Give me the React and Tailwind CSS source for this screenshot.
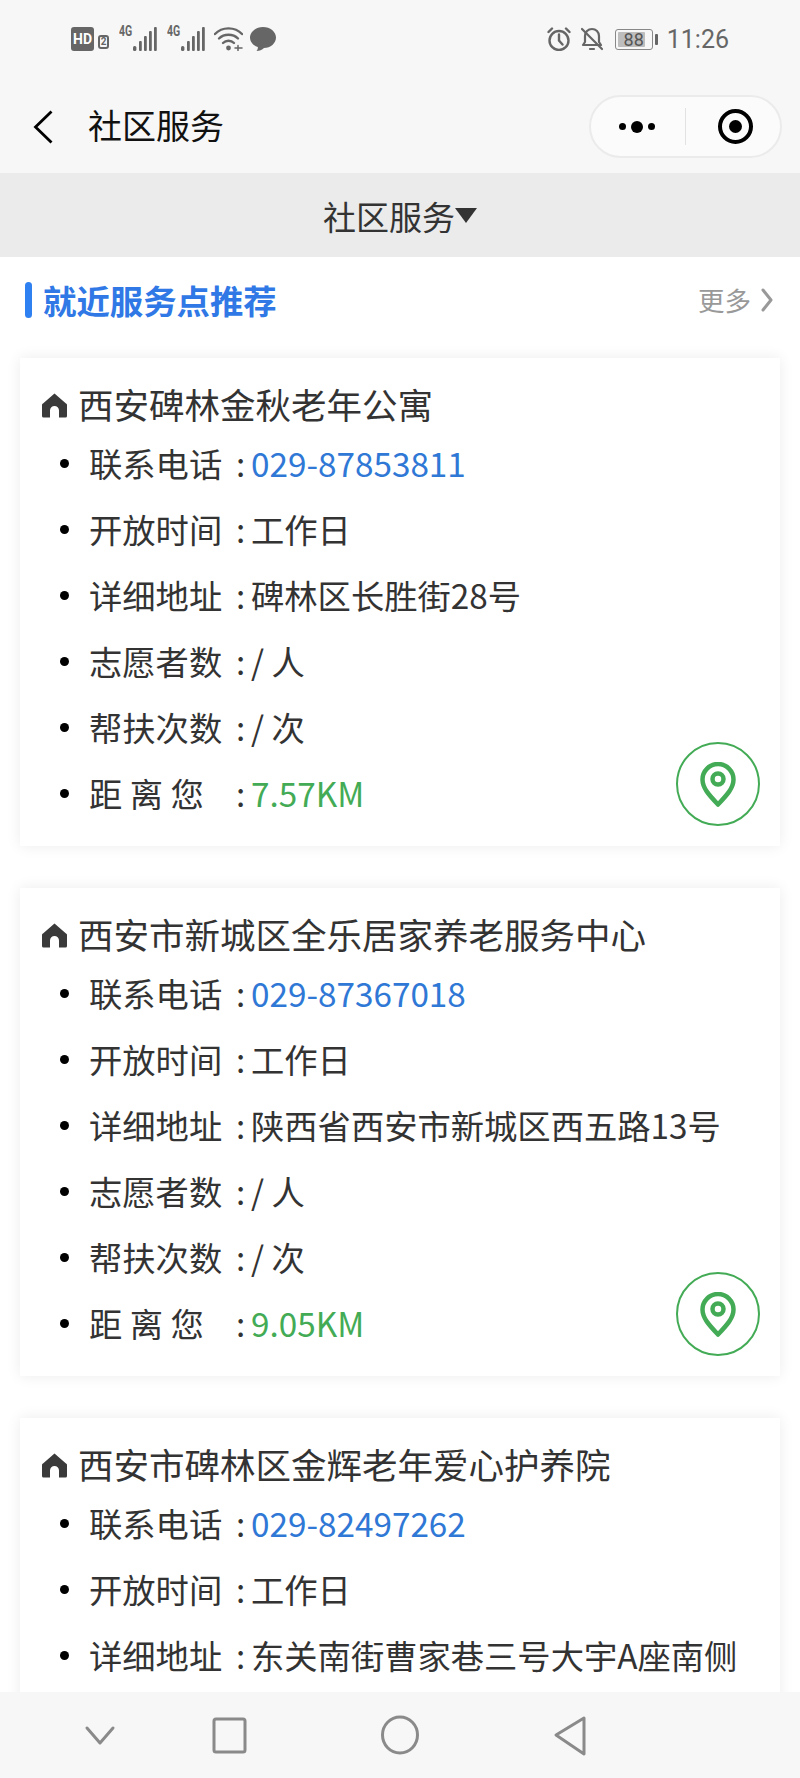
const font = { cjk: "font-['Noto_Sans_CJK_SC','Noto_Sans',sans-serif]" };

const places = [
  { name: "西安碑林金秋老年公寓", phone: "029-87853811", address: "碑林区长胜街28号", distance: "7.57KM" },
  { name: "西安市新城区全乐居家养老服务中心", phone: "029-87367018", address: "陕西省西安市新城区西五路13号", distance: "9.05KM" },
  { name: "西安市碑林区金辉老年爱心护养院", phone: "029-82497262", address: "东关南街曹家巷三号大宇A座南侧", distance: "3.21KM" },
];

function Signal() {
  return (
    <div className="flex items-start w-[39px] h-[24px] relative">
      <span className="absolute left-0 top-[-3px] text-[14px] leading-[14px] font-bold text-[#666] font-['Roboto',sans-serif] scale-x-75 origin-left">4G</span>
      <svg width="25" height="24" viewBox="0 0 25 24" className="absolute left-[14px] top-0" fill="#666">
        <rect x="0" y="19" width="3.4" height="5" rx="1.5" />
        <rect x="6" y="14" width="2.8" height="10" rx="1" />
        <rect x="11" y="9" width="2.8" height="15" rx="1" />
        <rect x="16" y="4" width="2.8" height="20" rx="1" />
        <rect x="21" y="0" width="2.8" height="24" rx="1" />
      </svg>
    </div>
  );
}

function StatusBar() {
  return (
    <div className="h-[80px] flex items-start justify-between pt-[27px] pl-[71px] pr-[71px]">
      <div className="flex items-center h-[24px]">
        <div className="w-[23px] h-[24px] rounded-[3px] bg-[#666] text-white text-[14px] font-bold leading-[24px] text-center font-['Roboto',sans-serif]">HD</div>
        <div className="ml-[4px] mt-[6px] w-[11px] h-[14px] rounded-[3px] border-2 border-[#666] text-[#666] text-[10px] font-bold leading-[10px] text-center font-['Roboto',sans-serif]">2</div>
        <div className="ml-[10px]"><Signal /></div>
        <div className="ml-[9px]"><Signal /></div>
        <svg className="ml-[8px]" width="29" height="24" viewBox="0 0 29 24" fill="none" stroke="#666" strokeWidth="2.400" strokeLinecap="round">
          <path d="M1 7c7-7.500 20-7.500 27 0" />
          <path d="M5 11.500c5-5 14-5 19 0" />
          <path d="M9 16c3-3 8-3 11 0" />
          <circle cx="14.500" cy="21" r="2.400" fill="#666" stroke="none" />
          <path d="M21 21h7M24 18.500v5" strokeWidth="1.500" />
        </svg>
        <svg className="ml-[7px]" width="26" height="24" viewBox="0 0 26 24" fill="#666">
          <path d="M13 0C5.800 0 0 4.700 0 10.500c0 4.300 3.200 8 7.800 9.600.3 1.200-.3 2.700-1.300 3.900 3 0 5.600-1.300 7.500-3C20.500 20.900 26 16.300 26 10.500 26 4.700 20.200 0 13 0z" />
        </svg>
      </div>
      <div className="flex items-center h-[24px]">
        <svg width="24" height="24" viewBox="0 0 24 24" fill="none" stroke="#666" strokeWidth="2.400" strokeLinecap="round">
          <circle cx="12" cy="13.500" r="9.500" />
          <path d="M12 7.500v6l3.500 4M1.500 5 5 1.500M22.500 5 19 1.500" />
        </svg>
        <svg className="ml-[10px]" width="22" height="24" viewBox="0 0 22 24" fill="none" stroke="#666" strokeWidth="2.200" strokeLinecap="round" strokeLinejoin="round">
          <path d="M4 9c0-4 3-7 7-7s7 3 7 7v6l2 3H2l2-3z" />
          <path d="M9 22h4M1 2l20 20" />
        </svg>
        <div className="ml-[12px] w-[38px] h-[21px] rounded-[3px] border border-[#888] p-[2px] relative">
          <div className="h-full w-[85%] bg-[#bdbdbd] rounded-[1px]" />
          <span className="absolute inset-0 text-center text-[18px] leading-[19px] text-[#555] font-['Roboto',sans-serif]">88</span>
        </div>
        <div className="ml-[2px] w-[3px] h-[11px] rounded-[1px] bg-[#666]" />
        <span className="ml-[9px] mt-[2px] text-[25px] leading-[24px] text-[#666] font-['Roboto',sans-serif]">11:26</span>
      </div>
    </div>
  );
}

function NavBar() {
  return (
    <div className="h-[93px] flex items-center justify-between pl-[33px] pr-[18px]">
      <div className="flex items-center">
        <svg width="20" height="34" viewBox="0 0 20 34" fill="none" stroke="#000" strokeWidth="2.800">
          <path d="M18.500 1.500 2.500 17l16 15.500" />
        </svg>
        <span className={`ml-[35px] -mt-[4px] text-[34px] leading-[46px] text-[#111] ${font.cjk}`}>社区服务</span>
      </div>
      <div className="w-[193px] h-[63px] rounded-full border-2 border-[#ebebeb] bg-[#fbfbfb] flex items-center">
        <div className="w-[95px] h-[37px] pr-[3px] border-r border-[#e2e2e2] flex items-center justify-center gap-[5px]">
          <span className="w-[7px] h-[7px] rounded-full bg-black" />
          <span className="w-[12px] h-[12px] rounded-full bg-black" />
          <span className="w-[7px] h-[7px] rounded-full bg-black" />
        </div>
        <div className="flex-1 pl-[4px] flex items-center justify-center">
          <div className="w-[35px] h-[35px] rounded-full border-[4px] border-black flex items-center justify-center">
            <span className="w-[13px] h-[13px] rounded-full bg-black" />
          </div>
        </div>
      </div>
    </div>
  );
}

function Row({ label, children }) {
  return (
    <li className="h-[66px] flex items-center text-[33.3px] leading-[66px] text-[#333]">
      <span className="w-[9px] h-[9px] rounded-full bg-black ml-[40px] mr-[20px]" />
      <span className="w-[132px] shrink-0 whitespace-pre">{label}</span>
      <span className="w-[30px] pl-[15px] shrink-0">:</span>
      <span className="whitespace-nowrap">{children}</span>
    </li>
  );
}

function PlaceCard({ place }) {
  return (
    <div className="relative bg-white mx-[20px] h-[488px] shrink-0 shadow-[0_0_14px_rgba(0,0,0,0.08)]">
      <div className="flex items-center pt-[20px] pl-[22px] h-[72px]">
        <svg className="mt-[3px]" width="25" height="25" viewBox="0 0 25 25" fill="#3a3a3a">
          <path d="M12.500 0.500 24 10.500a1.500 1.500 0 0 1 1 1.500v11a1.500 1.500 0 0 1-1.500 1.500H17v-7a4.500 4.500 0 0 0-9 0v7H1.500A1.500 1.500 0 0 1 0 23V12a1.500 1.500 0 0 1 1-1.500z" />
        </svg>
        <span className="ml-[11px] text-[35.5px] leading-[46px] text-[#333] whitespace-nowrap">{place.name}</span>
      </div>
      <ul>
        <Row label="联系电话"><span className="text-[#2f78d6]">{place.phone}</span></Row>
        <Row label="开放时间">工作日</Row>
        <Row label="详细地址">{place.address}</Row>
        <Row label="志愿者数">/ 人</Row>
        <Row label="帮扶次数">/ 次</Row>
        <Row label="距 离 您"><span className="text-[#43ab55]">{place.distance}</span></Row>
      </ul>
      <div className="absolute right-[20px] bottom-[20px] w-[84px] h-[84px] rounded-full border-2 border-[#43ab55] flex items-center justify-center">
        <svg width="36" height="45" viewBox="0 0 36 45" fill="none" stroke="#43ab55" strokeWidth="4.500" strokeLinejoin="round">
          <path d="M18 42.500C9 33 2.500 26 2.500 17.500a15.500 15.500 0 0 1 31 0C33.500 26 27 33 18 42.500z" />
          <circle cx="18" cy="17" r="5.500" />
        </svg>
      </div>
    </div>
  );
}

function BottomNav() {
  return (
    <div className="h-[86px] shrink-0 bg-[#f7f7f7] relative z-10">
      <svg width="800" height="86" viewBox="0 0 800 86" fill="none" stroke="#8a8a8a" strokeWidth="3" strokeLinejoin="round" strokeLinecap="round">
        <path d="M87 36l13 15 13-15" />
        <rect x="214" y="27" width="31" height="33" rx="2" />
        <ellipse cx="400" cy="43" rx="17.500" ry="18" />
        <path d="M584 26 556 43l28 19z" />
      </svg>
    </div>
  );
}

export default function App() {
  return (
    <div className={`h-[1778px] w-[800px] flex flex-col overflow-hidden bg-white ${font.cjk}`}>
      <div className="bg-[#f7f7f7] shrink-0">
        <StatusBar />
        <NavBar />
      </div>
      <div className="h-[84px] shrink-0 pt-[4px] bg-[#ebebeb] flex items-center justify-center text-[33px] text-[#333]">
        社区服务
        <span className="w-0 h-0 border-x-[11px] border-x-transparent border-t-[15px] border-t-[#333] -mt-[4px]" />
      </div>
      <div className="flex-1 min-h-0 overflow-hidden flex flex-col">
        <div className="h-[101px] shrink-0 flex items-center justify-between pb-[15px] pl-[25px] pr-[27px]">
          <div className="flex items-center">
            <span className="w-[7px] h-[36px] rounded-full bg-[#2f80f0]" />
            <span className="ml-[11px] text-[33.4px] leading-[44px] font-bold text-[#2f78e6]">就近服务点推荐</span>
          </div>
          <div className="flex items-center text-[#999]">
            <span className="text-[26.5px] leading-[36px]">更多</span>
            <svg className="ml-[10px]" width="12" height="24" viewBox="0 0 12 24" fill="none" stroke="#999" strokeWidth="3" strokeLinecap="round" strokeLinejoin="round">
              <path d="M2 2l8 10-8 10" />
            </svg>
          </div>
        </div>
        <div className="flex flex-col gap-[42px]">
          {places.map((place) => (
            <PlaceCard key={place.phone} place={place} />
          ))}
        </div>
      </div>
      <BottomNav />
    </div>
  );
}
